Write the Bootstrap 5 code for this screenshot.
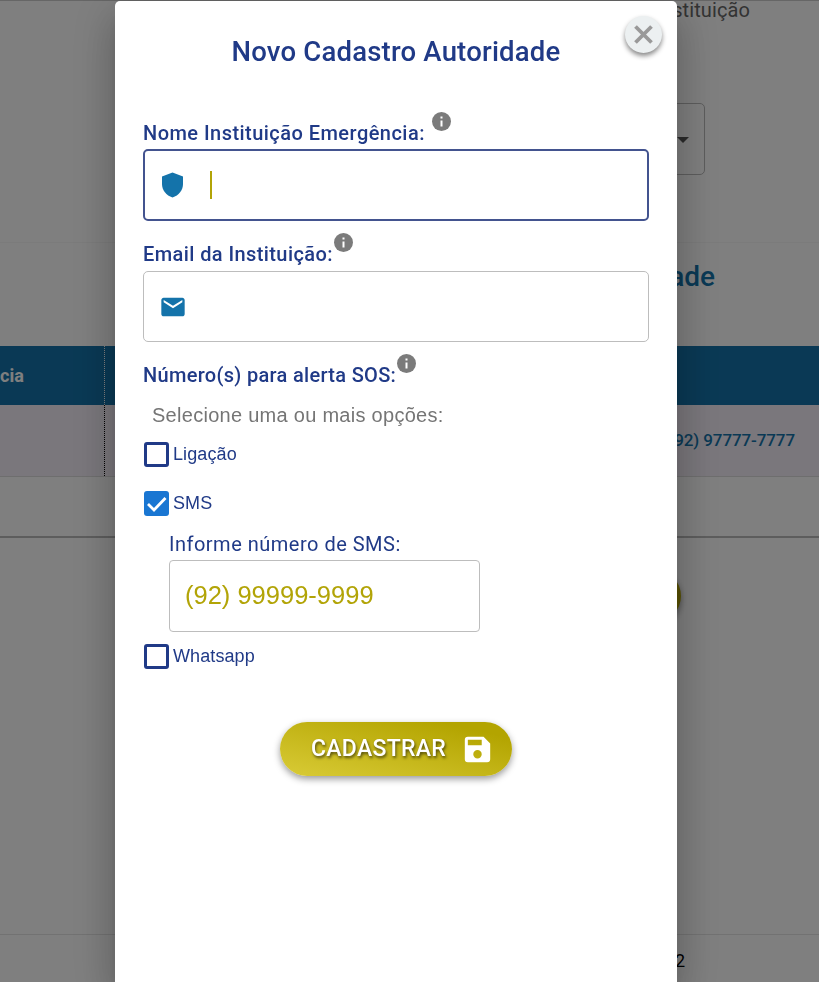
<!DOCTYPE html>
<html lang="pt-BR">
<head>
<meta charset="utf-8">
<meta name="viewport" content="width=device-width, initial-scale=1">
<title>Novo Cadastro Autoridade</title>
<link href="https://cdn.jsdelivr.net/npm/bootstrap@5.3.0/dist/css/bootstrap.min.css" rel="stylesheet">
<style>
:root{--navy:#203a87;--ocean:#1473aa;--gold:#b2a407}
body{font-family:Roboto,"Liberation Sans",sans-serif;color:#212121;background:#fff}
svg{display:block;flex:none}
.page-under{height:982px;border-top:1px solid #ccc;white-space:nowrap}
.filter-area{height:242px;border-bottom:1px solid #f6f6f6;padding-right:69px}
.filter-title{height:20px;line-height:18px;font-size:20px;color:#666;letter-spacing:.1px;width:200px}
.filter-select{width:300px;height:72px;margin:82px 45px 0 0;border:1px solid #bbb;border-radius:5px;padding-right:15px}
.caret{border:6px solid transparent;border-top-color:#555;border-bottom:0;margin-top:2px}
.list-title{height:103px;padding:14px 104px 0 0;font-size:28px;font-weight:500;line-height:40px;color:var(--ocean)}
.grid-head{height:59px;background:var(--ocean);color:#fff;font-weight:700;font-size:18px}
.grid-row{height:72px;background:#f5eff9;border-bottom:1px solid #ddd;color:var(--ocean);font-weight:500;font-size:17px;letter-spacing:-.1px}
.grid-first{width:105px;border-right:1px dotted #fff}
.grid-row .grid-first{border-color:#000}
.phone-cell{padding-right:24px}
.grid-foot{height:61px;border-bottom:2px solid #bbb}
.under-action{height:54px;width:232px;margin:31px 138px 0 0;border-radius:27px;background:var(--gold);box-shadow:0 3px 6px #0006}
.page-count{height:48px;margin-top:311px;border-top:1px solid #e5e5e5;padding:16px 134px 0 0;font-size:18px;line-height:20px;color:#000}
.shade{--bs-backdrop-opacity:.5}
.signup{width:562px;max-width:562px;margin:1px 142px 0 115px}
.signup .modal-content{height:981px;border:0;border-radius:5px 5px 0 0;padding:0 28px;background:#fff;box-shadow:0 11px 15px -7px #0003,0 24px 38px 3px #00000024,0 9px 46px 8px #0000001f}
.signup-title{height:99px;padding-top:30px;font-size:27.5px;line-height:41px;font-weight:500;color:var(--navy);letter-spacing:.2px}
.close-round{position:absolute;right:15px;top:15px;width:37px;height:37px;background:#ecf0f1;box-shadow:0 3px 5px #0007}
.field-label{height:49px;padding-top:16px;line-height:26px;font-size:20px;font-weight:500;color:var(--navy)}
.label-a{letter-spacing:.46px}.label-b{letter-spacing:.41px}.label-c{letter-spacing:.31px}
.info{margin:-22px 0 0 1px}
.label-a + .info{margin-left:7px}
.field{height:72px;border:1px solid #bdbdbd;border-radius:5px;padding-left:15px}
.field-mail{height:71px;margin-top:1px}
.field-focus{border:2px solid #43538f;padding-left:15px}
.text-cursor{width:2px;height:28px;background:var(--gold);margin-left:25px}
.hint{height:51px;padding:11px 0 0 9px;font:20px/26px "Liberation Sans",Arial,sans-serif;color:#757575;letter-spacing:.28px}
.opt{height:25px;font:18px/24px "Liberation Sans",Arial,sans-serif;color:var(--navy);gap:4px;padding-left:1px;letter-spacing:.1px}
.opt span{margin-top:-2px}
.tick{width:25px;height:25px;border:3px solid var(--navy);border-radius:3px}
.sms-block{padding:17px 0 12px 26px}
.sms-label{height:27px;font-size:20px;line-height:23px;color:var(--navy);letter-spacing:.5px}
.sms-field{width:311px;height:72px;border:1px solid #bdbdbd;border-radius:4px;padding:0 0 2px 15px;font:25.500px "Liberation Sans",Arial,sans-serif;color:var(--gold)}
.save{width:232px;height:54px;margin:53px 0 0 137px;background:linear-gradient(13deg,#d9cb36,#b3a400 85%);color:#fff;font-size:23px;letter-spacing:.3px;font-weight:500;box-shadow:0 3px 7px #0006;text-shadow:1px 2px 3px #0009;padding:0 20px 0 31px}
.save:hover{background:var(--gold);color:#fff}
</style>
</head>
<body class="overflow-hidden">
<main class="page-under overflow-hidden">
  <section class="filter-area d-flex flex-column align-items-end">
    <div class="filter-title text-end">Instituição</div>
    <div class="filter-select d-flex align-items-center justify-content-end"><i class="caret"></i></div>
  </section>
  <div class="list-title text-end">Autoridade</div>
  <div class="grid-head d-flex"><div class="grid-first d-flex align-items-center">cia</div></div>
  <div class="grid-row d-flex"><div class="grid-first"></div><div class="phone-cell d-flex flex-fill align-items-center justify-content-end">(92) 97777-7777</div></div>
  <div class="grid-foot"></div>
  <div class="under-action ms-auto"></div>
  <div class="page-count text-end">2</div>
</main>
<div class="modal-backdrop show shade"></div>
<div class="modal d-block overflow-hidden" role="dialog" aria-modal="true">
  <div class="modal-dialog signup">
    <form class="modal-content">
      <button type="button" class="close-round btn rounded-circle p-0 border-0 d-flex align-items-center justify-content-center" aria-label="Fechar">
        <svg width="19" height="19" viewBox="0 0 19 19" fill="none" stroke="#999" stroke-width="3.8"><path d="M1.500 1.500l16 16m0-16l-16 16"/></svg>
      </button>
      <h1 class="signup-title text-center m-0">Novo Cadastro Autoridade</h1>

      <div class="field-label d-flex align-items-center"><span class="label-a">Nome Instituição Emergência:</span>
        <svg class="info" width="19" height="19" viewBox="0 0 19 19"><circle cx="9.5" cy="9.5" r="9.5" fill="#7b7b7b"/><path d="M8.500 4.500h2v2h-2zm0 4h2v6h-2z" fill="#fff"/></svg>
      </div>
      <div class="field field-focus d-flex align-items-center">
        <svg width="25" height="26" viewBox="0 0 25 26"><path d="M12.500.5L23 4.500v7.600c0 6.200-4.200 11.500-10.500 13.400C6.200 23.600 2 18.300 2 12.100V4.500z" fill="#1473aa"/></svg>
        <div class="text-cursor"></div>
      </div>

      <div class="field-label d-flex align-items-center"><span class="label-b">Email da Instituição:</span>
        <svg class="info" width="19" height="19" viewBox="0 0 19 19"><circle cx="9.5" cy="9.5" r="9.5" fill="#7b7b7b"/><path d="M8.500 4.500h2v2h-2zm0 4h2v6h-2z" fill="#fff"/></svg>
      </div>
      <div class="field field-mail d-flex align-items-center">
        <svg width="28" height="28" viewBox="0 0 24 24"><path d="M20 4H4c-1.100 0-2 .9-2 2v12c0 1.100.9 2 2 2h16c1.100 0 2-.9 2-2V6c0-1.100-.9-2-2-2zm0 4l-8 5-8-5V6l8 5 8-5z" fill="#1473aa"/></svg>
      </div>

      <div class="field-label d-flex align-items-center"><span class="label-c">Número(s) para alerta SOS:</span>
        <svg class="info" width="19" height="19" viewBox="0 0 19 19"><circle cx="9.5" cy="9.5" r="9.5" fill="#7b7b7b"/><path d="M8.500 4.500h2v2h-2zm0 4h2v6h-2z" fill="#fff"/></svg>
      </div>
      <div class="hint">Selecione uma ou mais opções:</div>
      <label class="opt d-flex align-items-center"><i class="tick"></i><span>Ligação</span></label>
      <label class="opt d-flex align-items-center mt-4"><svg width="25" height="25" viewBox="0 0 25 25"><rect width="25" height="25" rx="3" fill="#1976d2"/><path d="M4 13l6 6L21.500 7" fill="none" stroke="#fff" stroke-width="2.800"/></svg><span>SMS</span></label>
      <div class="sms-block">
        <div class="sms-label">Informe número de SMS:</div>
        <div class="sms-field d-flex align-items-center">(92) 99999-9999</div>
      </div>
      <label class="opt d-flex align-items-center"><i class="tick"></i><span>Whatsapp</span></label>
      <button type="button" class="save btn rounded-pill border-0 d-flex align-items-center justify-content-between">CADASTRAR
        <svg width="29" height="29" viewBox="0 0 24 24"><path d="M17 1.500H4A2.500 2.500 0 0 0 1.500 4v16A2.500 2.500 0 0 0 4 22.500h16a2.500 2.500 0 0 0 2.500-2.500V7zM12 19.500a3.500 3.500 0 1 1 0-7 3.500 3.500 0 0 1 0 7zM15.500 8.500H4v-4.500h11.500z" fill="#fff"/></svg>
      </button>
    </form>
  </div>
</div>
<script src="https://cdn.jsdelivr.net/npm/bootstrap@5.3.0/dist/js/bootstrap.bundle.min.js"></script>
</body>
</html>
